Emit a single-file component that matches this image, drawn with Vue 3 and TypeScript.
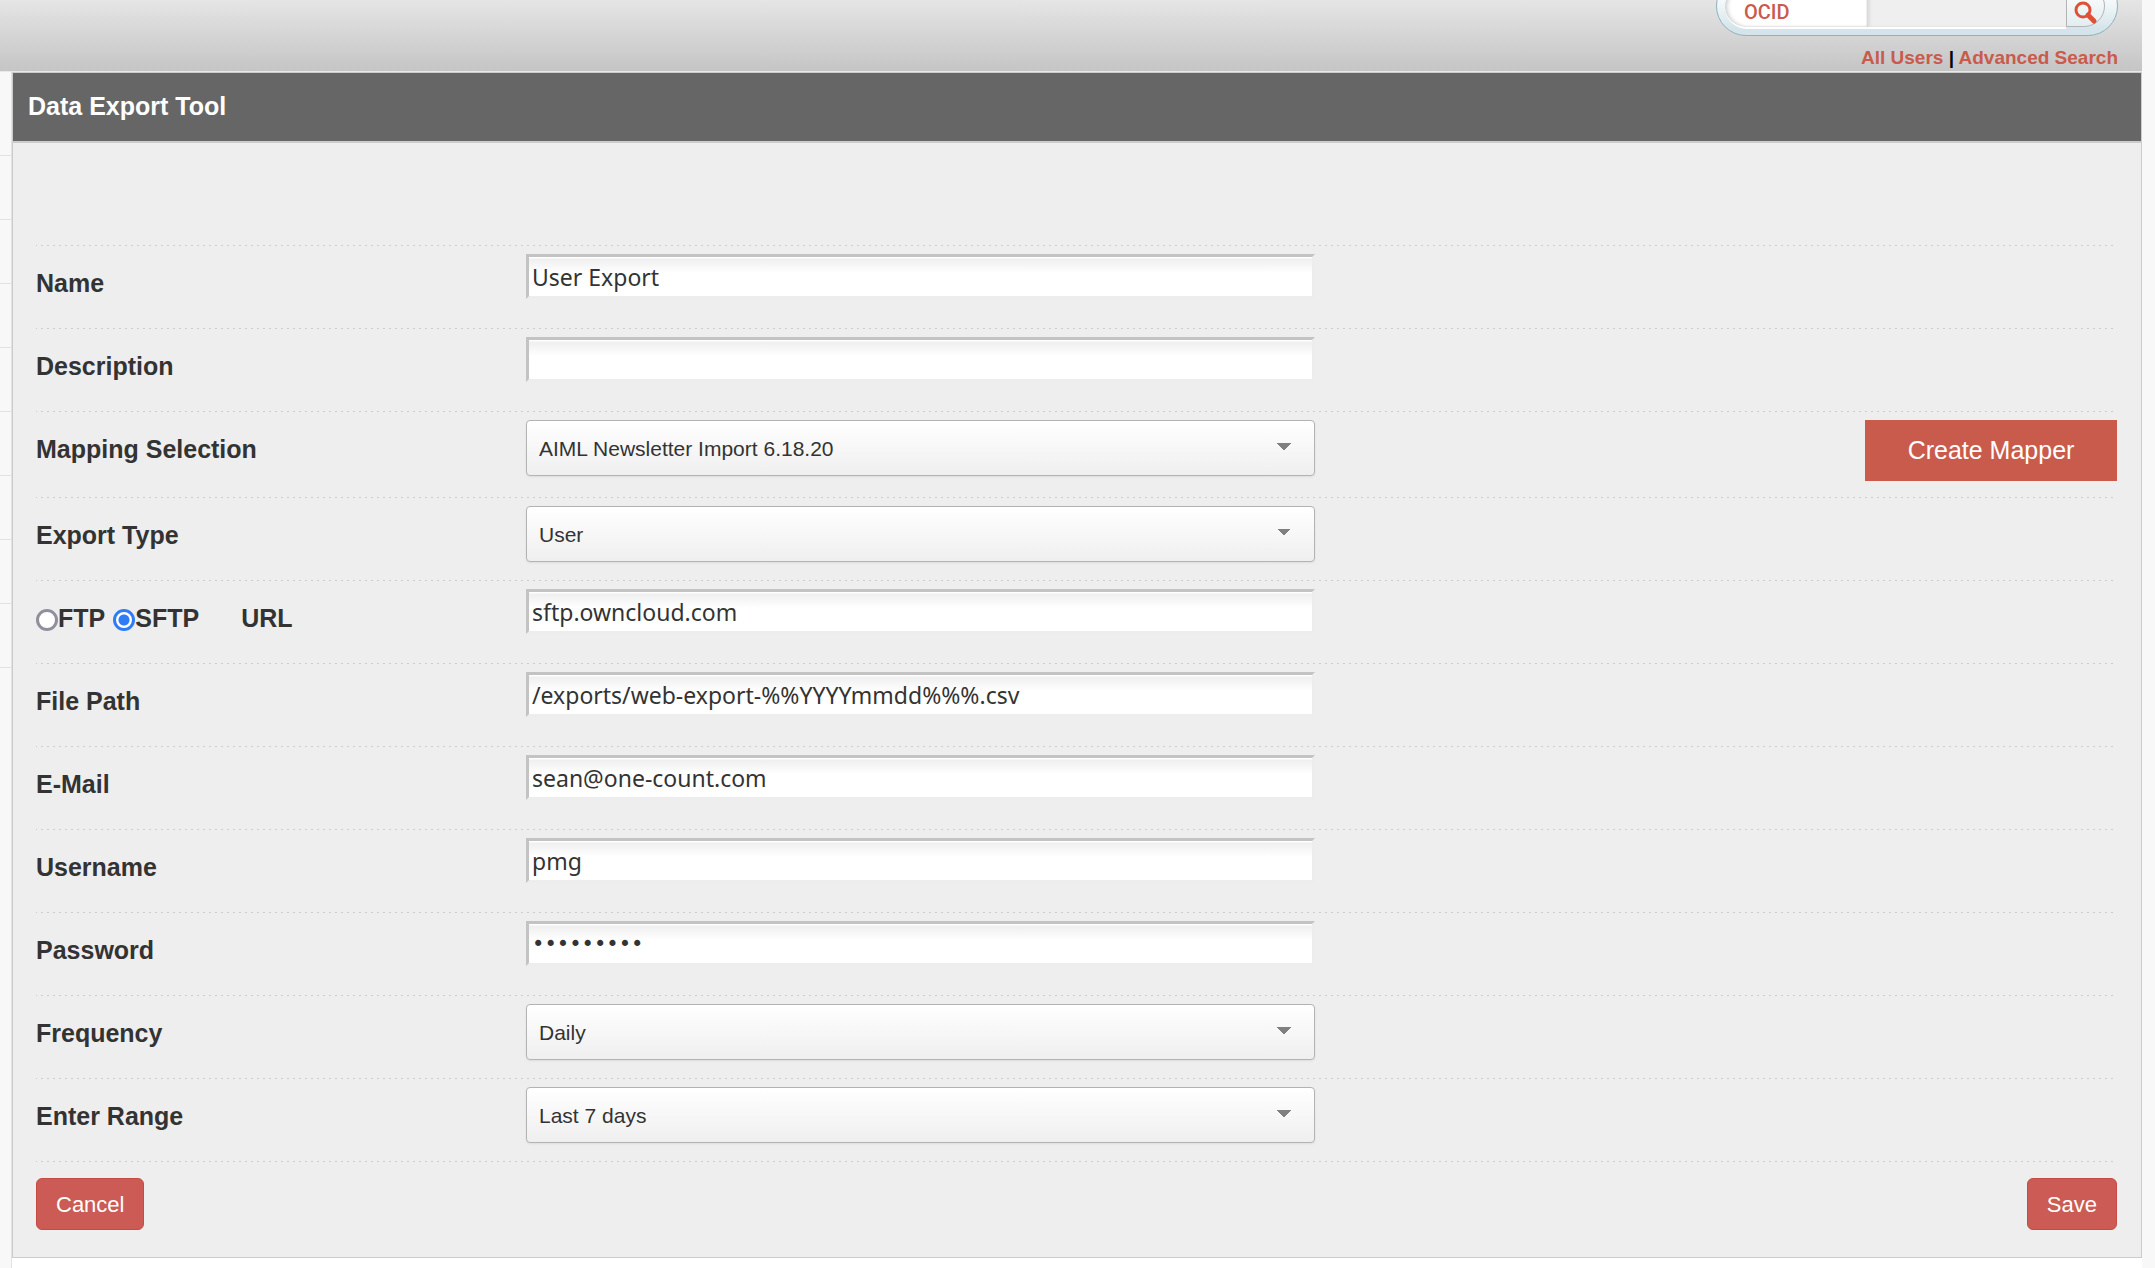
<script setup lang="ts">
import { ref } from 'vue'

interface Row {
  id: string
  label: string
  kind: 'text' | 'password' | 'select'
  value: string
  mapper?: boolean
  protocol?: boolean
}

const rows = ref<Row[]>([
  { id: 'name', label: 'Name', kind: 'text', value: 'User Export' },
  { id: 'description', label: 'Description', kind: 'text', value: '' },
  { id: 'mapping', label: 'Mapping Selection', kind: 'select', value: 'AIML Newsletter Import 6.18.20', mapper: true },
  { id: 'type', label: 'Export Type', kind: 'select', value: 'User' },
  { id: 'url', label: 'URL', kind: 'text', value: 'sftp.owncloud.com', protocol: true },
  { id: 'path', label: 'File Path', kind: 'text', value: '/exports/web-export-%%YYYYmmdd%%%.csv' },
  { id: 'email', label: 'E-Mail', kind: 'text', value: 'sean@one-count.com' },
  { id: 'username', label: 'Username', kind: 'text', value: 'pmg' },
  { id: 'password', label: 'Password', kind: 'password', value: 'xxxxxxxxx' },
  { id: 'frequency', label: 'Frequency', kind: 'select', value: 'Daily' },
  { id: 'range', label: 'Enter Range', kind: 'select', value: 'Last 7 days' },
])

const protocol = ref('SFTP')
const query = ref('')
const sidebarItems = 9
</script>

<template>
  <div class="page">
    <header class="top">
      <form class="search" @submit.prevent>
        <button type="button" class="search-field">OCID</button>
        <input v-model="query" class="search-input" type="text" aria-label="Search" />
        <button type="submit" class="search-go" aria-label="Run search">
          <svg viewBox="0 0 24 24" width="24" height="24" aria-hidden="true">
            <circle cx="9" cy="9" r="7" fill="none" stroke="#dd5138" stroke-width="3" />
            <path d="M14 14L20 20" stroke="#dd5138" stroke-width="5" stroke-linecap="round" />
          </svg>
        </button>
      </form>
      <nav class="links">
        <a href="#users">All Users</a> <span>|</span> <a href="#advanced">Advanced Search</a>
      </nav>
    </header>

    <div class="body">
      <aside class="sidebar">
        <div v-for="n in sidebarItems" :key="n" class="side-item"></div>
      </aside>
      <main class="panel">
        <h1 class="title">Data Export Tool</h1>
        <form class="form" @submit.prevent>
          <div v-for="row in rows" :key="row.id" class="row">
            <div class="caption">
              <template v-if="row.protocol">
                <label class="choice"><input v-model="protocol" type="radio" name="protocol" value="FTP" />FTP</label>
                <label class="choice"><input v-model="protocol" type="radio" name="protocol" value="SFTP" />SFTP</label>
              </template>
              <label :for="row.id" :class="{ url: row.protocol }">{{ row.label }}</label>
            </div>
            <select v-if="row.kind === 'select'" :id="row.id" v-model="row.value" class="select">
              <option :value="row.value">{{ row.value }}</option>
            </select>
            <input v-else :id="row.id" v-model="row.value" :type="row.kind" class="field" />
            <button v-if="row.mapper" type="button" class="mapper">Create Mapper</button>
          </div>
          <div class="actions">
            <button type="button" class="btn">Cancel</button>
            <button type="submit" class="btn">Save</button>
          </div>
        </form>
      </main>
    </div>
  </div>
</template>

<style>
body {
  margin: 0;
  background: #fff;
}
</style>

<style scoped>
.page {
  box-sizing: border-box;
  display: flex;
  flex-direction: column;
  min-height: 100vh;
  border-right: 13px solid #f8f8f8;
  font-family: "Liberation Sans", Arial, sans-serif;
  color: #333;
}
button,
input,
select {
  box-sizing: border-box;
  margin: 0;
  font-family: inherit;
}
.top {
  display: flex;
  flex-direction: column;
  align-items: flex-end;
  box-sizing: border-box;
  height: 72px;
  padding-right: 24px;
  overflow: hidden;
  background: linear-gradient(#e5e5e5, #c5c5c5);
  border-bottom: 1px solid #e8e8e8;
}
.search {
  display: flex;
  flex-shrink: 0;
  box-sizing: border-box;
  width: 402px;
  height: 60px;
  margin-top: -24px;
  padding: 8px 12px 6px 8px;
  border: 1px solid #8fb3bd;
  border-radius: 30px;
  background: linear-gradient(#f4fafb 40%, #d5e4ea 90%);
}
.search-field {
  width: 143px;
  padding: 11px 0 0 19px;
  border: 0;
  border-bottom: 2px solid #fff;
  border-radius: 22px 0 0 22px;
  background: #fff;
  box-shadow: inset 3px 0 4px -1px #ccc, inset -1px 0 2px #ccc;
  color: #c95b4d;
  font: 500 20px Roboto, sans-serif;
  text-align: left;
}
.search-input {
  flex: 1;
  min-width: 0;
  border: 0;
  border-bottom: 2px solid #fff;
  background: #efefef;
  box-shadow: inset 2px 0 3px #ddd;
}
.search-go {
  width: 39px;
  margin-bottom: 2px;
  padding: 13px 0 0 7px;
  border: 1px solid #b4b4b4;
  border-radius: 0 22px 22px 0;
  background: linear-gradient(#fff, #e3edf0);
  text-align: left;
}
.search-go svg {
  display: block;
}
.links {
  margin-top: 10px;
  color: #000;
  font-size: 19px;
  font-weight: bold;
  line-height: 24px;
}
.links a {
  color: #c95b4d;
  text-decoration: none;
}
.body {
  display: flex;
  flex: 1;
  align-items: flex-start;
}
.sidebar {
  flex: none;
  align-self: stretch;
  box-sizing: border-box;
  width: 12px;
  padding-top: 20px;
  border-right: 1px solid #e2e2e2;
  background: #f8f8f8;
}
.side-item {
  box-sizing: border-box;
  height: 64px;
  border-bottom: 1px solid #e2e2e2;
}
.panel {
  flex: 1;
  min-width: 0;
  border: 1px solid #ccc;
  background: #eee;
}
.title {
  margin: 0;
  padding: 17px 15px 19px;
  border-bottom: 2px solid #ccc;
  background: #666;
  color: #fff;
  font-size: 25px;
  line-height: 32px;
}
.form {
  padding: 102px 24px 27px 23px;
}
.row,
.actions {
  display: flex;
  align-items: flex-start;
  box-sizing: border-box;
  background: repeating-linear-gradient(to right, #ccc 0 1px, transparent 1px 5px, #ccc 5px 6px) 0 0 / 100% 1px no-repeat;
}
.row {
  min-height: 83px;
  padding: 9px 0 16px;
}
.caption {
  display: flex;
  flex: none;
  width: 490px;
  padding-top: 13px;
  font-size: 25px;
  font-weight: bold;
  line-height: 32px;
}
.choice {
  display: flex;
  align-items: center;
  margin-right: 8px;
}
.choice input {
  width: 22px;
  height: 22px;
  margin-top: 3px;
  appearance: none;
  border: 3px solid #918f9d;
  border-radius: 50%;
  background: #fff;
}
.choice input:checked {
  border-color: #2f7cf6;
  background: radial-gradient(circle, #2f7cf6 5px, #fff 6px);
}
.url {
  margin-left: 34px;
}
.field {
  width: 789px;
  height: 45px;
  padding: 0 3px;
  border: 3px solid;
  border-color: #c3c3c3 #ededed #ededed #c3c3c3;
  border-radius: 0;
  outline: 0;
  background: linear-gradient(#fff 1px, #efefef 2px, #fff 16px);
  color: #333;
  font: 23px "Noto Sans", sans-serif;
}
.field[type="password"] {
  font: 21px "DejaVu Sans", sans-serif;
}
.select {
  width: 789px;
  height: 56px;
  padding: 0 12px;
  appearance: none;
  border: 1px solid #b3b3b3;
  border-radius: 4px;
  background:
    conic-gradient(from -45deg at 50% 100%, #808080 90deg, transparent 0) right 23px top 22px / 14px 7px no-repeat,
    linear-gradient(#fff, #efefef);
  box-shadow: 0 1px 2px #ddd;
  color: #333;
  font-size: 21px;
}
.mapper {
  width: 252px;
  height: 61px;
  margin-left: auto;
  border: 0;
  background: #c95b4d;
  color: #fff;
  font-size: 25px;
}
.actions {
  justify-content: space-between;
  padding-top: 17px;
}
.btn {
  height: 52px;
  padding: 1px 19px 0;
  border: 1px solid #c64b43;
  border-radius: 6px;
  background: #cb5b54;
  color: #fff;
  font-size: 22px;
}
</style>
